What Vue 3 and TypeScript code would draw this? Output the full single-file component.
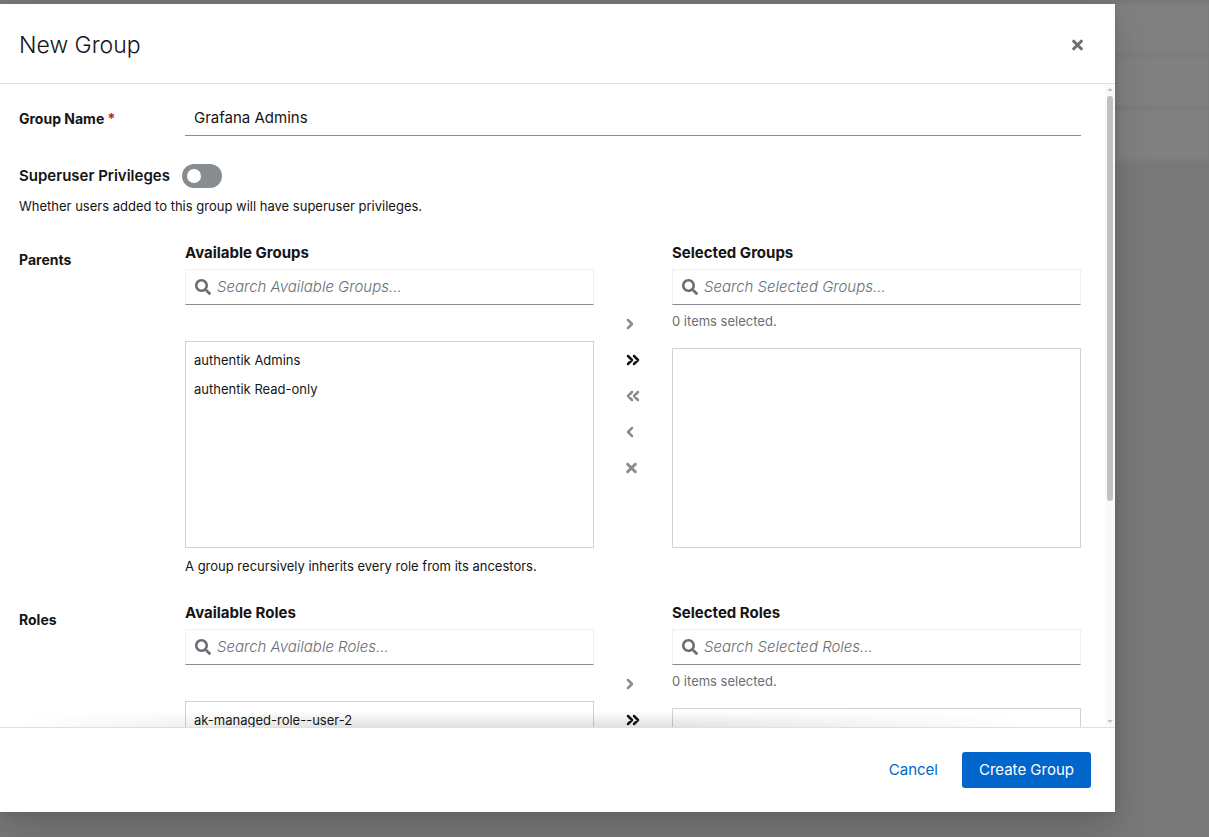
<script setup lang="ts">
import { ref } from 'vue'

interface Transfer {
  id: string
  label: string
  noun: string
  items: string[]
  help: string
}

interface Control {
  name: string
  path: string
  width: number
  enabled: boolean
}

const groupName = ref('Grafana Admins')
const superuser = ref(false)

const transfers: Transfer[] = [
  {
    id: 'groups',
    label: 'Parents',
    noun: 'Groups',
    items: ['authentik Admins', 'authentik Read-only'],
    help: 'A group recursively inherits every role from its ancestors.',
  },
  {
    id: 'roles',
    label: 'Roles',
    noun: 'Roles',
    items: ['ak-managed-role--user-2'],
    help: '',
  },
]

const controls: Control[] = [
  { name: 'Add selected', path: 'M2 2 6 6 2 10', width: 8, enabled: false },
  { name: 'Add all', path: 'M2 2 6 6 2 10M8 2 12 6 8 10', width: 14, enabled: true },
  { name: 'Remove all', path: 'M6 2 2 6 6 10M12 2 8 6 12 10', width: 14, enabled: false },
  { name: 'Remove selected', path: 'M6 2 2 6 6 10', width: 8, enabled: false },
]

const crossPath = 'M1.700 2.200 9.300 9.800M9.300 2.200 1.700 9.800'
const searchPath =
  'M505 442.7 405.3 343c-4.500-4.500-10.600-7-17-7H372c27.600-35.300 44-79.700 44-128C416 93.100 322.900 0 208 0S0 93.100 0 208s93.100 208 208 208c48.300 0 92.700-16.400 128-44v16.300c0 6.400 2.500 12.500 7 17l99.700 99.700c9.400 9.400 24.600 9.400 33.900 0l28.300-28.300c9.400-9.400 9.400-24.600.1-34zM208 336c-70.700 0-128-57.200-128-128 0-70.700 57.200-128 128-128 70.700 0 128 57.200 128 128 0 70.700-57.200 128-128 128z'
</script>

<template>
  <div class="page">
    <div class="rows" aria-hidden="true">
      <div v-for="n in 3" :key="n" class="row"></div>
    </div>
    <form class="modal" role="dialog" aria-labelledby="modal-title" @submit.prevent>
      <header class="head">
        <h1 id="modal-title">New Group</h1>
        <button type="button" class="close" aria-label="Close">
          <svg class="cross" width="11" height="12" viewBox="0 0 11 12"><path :d="crossPath" /></svg>
        </button>
      </header>

      <div class="middle">
        <div class="body">
          <div class="field">
            <label class="label" for="group-name">Group Name <span class="required">*</span></label>
            <input id="group-name" v-model="groupName" class="text" type="text" />
          </div>

          <div class="switch-block">
            <label class="switch">
              <span>Superuser Privileges</span>
              <input v-model="superuser" type="checkbox" role="switch" />
            </label>
            <p class="help">Whether users added to this group will have superuser privileges.</p>
          </div>

          <div v-for="t in transfers" :key="t.id" class="field transfer" role="group" :aria-labelledby="t.id">
            <span :id="t.id" class="label">{{ t.label }}</span>
            <div>
              <div class="dual">
                <section class="pane">
                  <h2>Available {{ t.noun }}</h2>
                  <label class="search">
                    <svg width="16" height="16" viewBox="0 0 512 512"><path :d="searchPath" /></svg>
                    <input type="search" :aria-label="`Search Available ${t.noun}`" :placeholder="`Search Available ${t.noun}...`" />
                  </label>
                  <ul class="list available">
                    <li v-for="item in t.items" :key="item">{{ item }}</li>
                  </ul>
                </section>

                <div class="controls">
                  <button v-for="c in controls" :key="c.name" type="button" :aria-label="c.name" :disabled="!c.enabled">
                    <svg class="chevron" :width="c.width" height="12" :viewBox="`0 0 ${c.width} 12`"><path :d="c.path" /></svg>
                  </button>
                  <button type="button" aria-label="Clear" disabled>
                    <svg class="cross" width="11" height="12" viewBox="0 0 11 12"><path :d="crossPath" /></svg>
                  </button>
                </div>

                <section class="pane">
                  <h2>Selected {{ t.noun }}</h2>
                  <label class="search">
                    <svg width="16" height="16" viewBox="0 0 512 512"><path :d="searchPath" /></svg>
                    <input type="search" :aria-label="`Search Selected ${t.noun}`" :placeholder="`Search Selected ${t.noun}...`" />
                  </label>
                  <p class="status">0 items selected.</p>
                  <ul class="list"></ul>
                </section>
              </div>
              <p v-if="t.help" class="help">{{ t.help }}</p>
            </div>
          </div>
        </div>
        <div class="scrollbar" aria-hidden="true">
          <svg width="6" height="3" viewBox="0 0 6 3"><path d="M0 3 3 0 6 3z" /></svg>
          <div class="track"><div class="thumb"></div></div>
          <svg width="6" height="3" viewBox="0 0 6 3"><path d="M0 0 3 3 6 0z" /></svg>
        </div>
        <div class="fade" aria-hidden="true"></div>
      </div>

      <footer class="foot">
        <button type="button" class="btn link">Cancel</button>
        <button type="submit" class="btn primary">Create Group</button>
      </footer>
    </form>
  </div>
</template>

<style>
body {
  margin: 0;
  overflow: hidden;
}
</style>

<style scoped>
.page {
  box-sizing: border-box;
  height: 100vh;
  padding: 4px 94px 25px 0;
  position: relative;
  background: #787878;
  color: #151515;
  font-family: Inter, "Noto Sans", sans-serif;
  font-size: 15px;
  line-height: 24px;
}
.page * {
  box-sizing: border-box;
}
h1, h2, p, ul {
  margin: 0;
  padding: 0;
}
button, input {
  font: inherit;
  color: inherit;
  margin: 0;
  border: 0;
  background: none;
}
.rows {
  position: absolute;
  inset: 4px 0 auto 0;
  background: #7b7b7b;
  filter: blur(1px);
}
.row {
  height: 49px;
  margin-bottom: 4px;
  background: #808080;
}
.modal {
  position: relative;
  height: 100%;
  display: flex;
  flex-direction: column;
  background: #fff;
  box-shadow: 0 16px 32px rgba(3, 3, 3, 0.16), 0 0 8px rgba(3, 3, 3, 0.1);
}
.head {
  display: flex;
  align-items: center;
  justify-content: space-between;
  height: 80px;
  flex: none;
  padding: 2px 24px 0 19px;
  border-bottom: 1px solid #e0e0e0;
}
h1 {
  font-size: 23px;
  line-height: 32px;
  font-weight: 300;
}
.close {
  display: flex;
  padding: 8px;
  color: #6a6e73;
}
.cross path, .chevron path {
  fill: none;
  stroke: currentColor;
  stroke-width: 3;
  stroke-linecap: round;
}
.chevron path {
  stroke-width: 2.500;
  stroke-linejoin: round;
}
.middle {
  position: relative;
  display: flex;
  flex: 1;
  min-height: 0;
}
.body {
  flex: 1;
  padding: 16px 24px 16px 19px;
  overflow-y: auto;
  scrollbar-width: none;
}
.field {
  display: grid;
  grid-template-columns: 166px 1fr;
}
.label {
  padding-top: 8px;
  font-size: 14px;
  line-height: 21px;
  font-weight: 700;
}
.required {
  color: #c9190b;
}
.text {
  height: 36px;
  width: 100%;
  padding: 0 9px;
  border-bottom: 1px solid #8a8d90;
  outline: 0;
}
.switch-block {
  margin: 28px 0 24px;
}
.switch {
  display: inline-flex;
  gap: 12px;
  font-weight: 600;
  vertical-align: top;
}
.switch input {
  appearance: none;
  display: flex;
  align-items: center;
  width: 40px;
  height: 24px;
  padding: 0 5px;
  border-radius: 12px;
  background: #8a8d90;
}
.switch input::before {
  content: "";
  width: 14px;
  height: 14px;
  border-radius: 50%;
  background: #fff;
}
.switch input:checked {
  justify-content: flex-end;
  background: #06c;
}
.help, .status {
  margin-top: 8px;
  font-size: 13px;
  line-height: 21px;
}
.transfer {
  margin-bottom: 24px;
}
.dual {
  display: grid;
  grid-template-columns: 1fr 78px 1fr;
  min-height: 307px;
}
.pane {
  display: flex;
  flex-direction: column;
  min-width: 0;
}
h2 {
  font-size: 15px;
  line-height: 24px;
  font-weight: 700;
}
.search {
  display: flex;
  align-items: center;
  gap: 6px;
  height: 36px;
  margin-top: 4px;
  padding: 0 9px;
  border: 1px solid #f0f0f0;
  border-bottom-color: #8a8d90;
}
.search svg {
  flex: none;
  fill: #6a6e73;
}
.search input {
  flex: 1;
  min-width: 0;
  padding: 0;
  outline: 0;
}
.search input::placeholder {
  color: #6a6e73;
  font-style: italic;
  font-weight: 300;
  opacity: 1;
}
.status {
  margin: 6px 0 16px;
  color: #6a6e73;
}
.list {
  flex: 1;
  padding: 4px 0;
  border: 1px solid #d2d2d2;
  list-style: none;
  font-size: 13px;
  line-height: 21px;
}
.available {
  margin-top: 36px;
}
.list li {
  padding: 4px 8px;
}
.controls {
  padding: 65px 16px 0;
}
.controls button {
  display: flex;
  align-items: center;
  height: 36px;
  padding: 0 16px;
}
.controls button:disabled {
  color: #8a8d90;
}
.scrollbar {
  display: flex;
  flex-direction: column;
  align-items: center;
  gap: 5px;
  width: 10px;
  padding: 4px 0;
  background: #fafafa;
}
.scrollbar svg {
  flex: none;
  fill: #c1c1c1;
}
.track {
  flex: 1;
  padding-bottom: 5px;
}
.thumb {
  width: 6px;
  height: 66%;
  border-radius: 3px;
  background: #c1c1c1;
}
.fade {
  position: absolute;
  inset: auto 0 0 0;
  height: 16px;
  pointer-events: none;
  background: linear-gradient(to top, rgba(3, 3, 3, 0.12), transparent);
  mask-image: linear-gradient(to right, transparent 20px, #000 30%, #000 60%, transparent 92%);
}
.foot {
  display: flex;
  flex: none;
  justify-content: flex-end;
  gap: 7px;
  padding: 24px;
  border-top: 1px solid #e0e0e0;
}
.btn {
  height: 36px;
  padding: 0 17px;
  border-radius: 3px;
}
.link {
  color: #06c;
}
.primary {
  background: #06c;
  color: #fff;
}
</style>
